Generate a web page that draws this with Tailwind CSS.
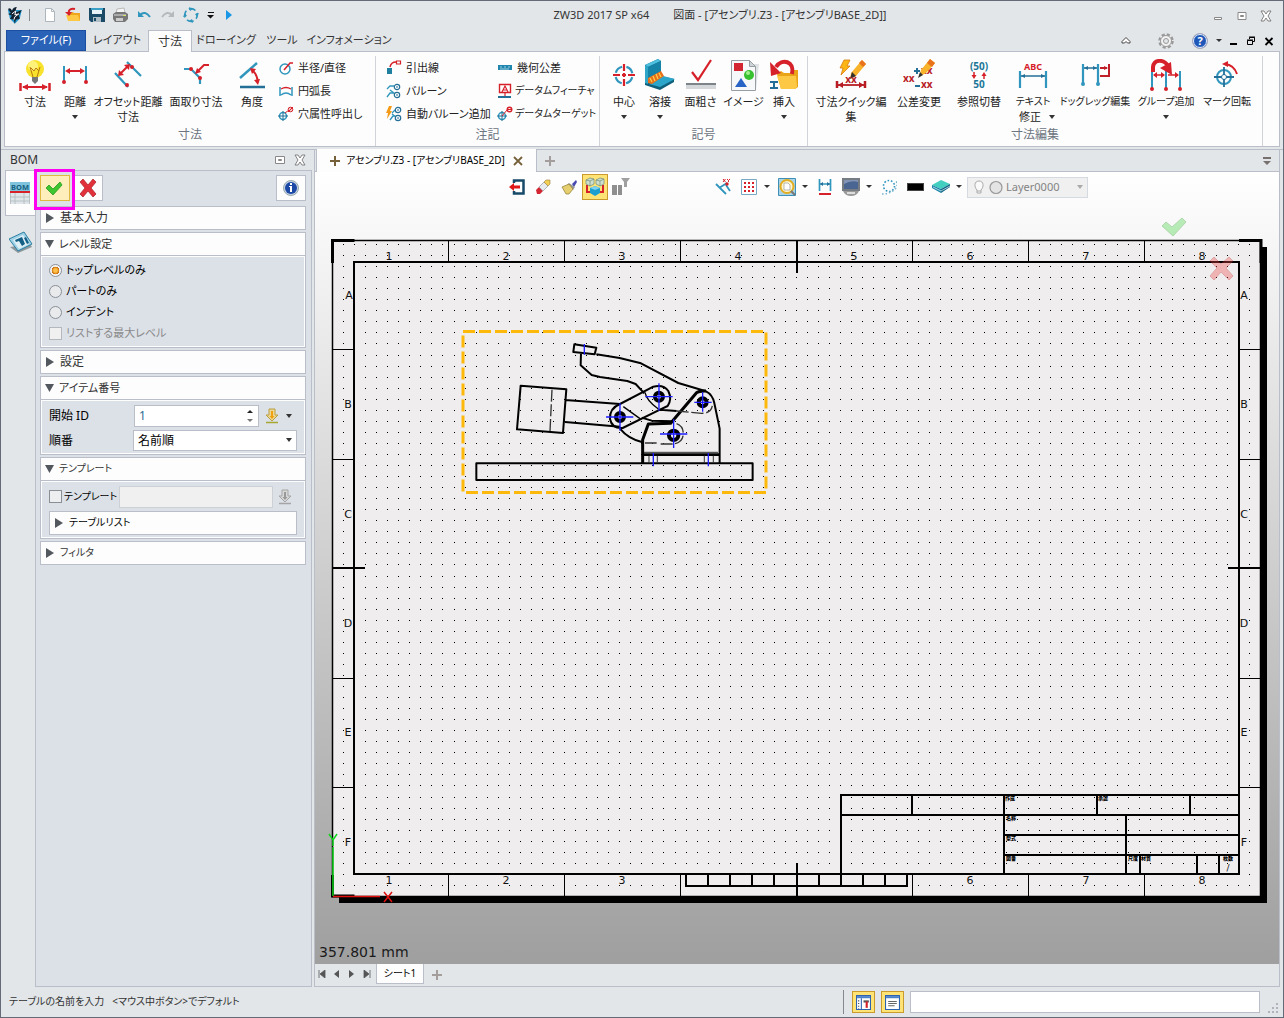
<!DOCTYPE html>
<html lang="ja">
<head>
    <meta charset="UTF-8">
    <meta name="viewport" content="width=device-width, initial-scale=1.0">
    <title>ZW3D 2017 SP x64</title>
    <script src="https://cdn.jsdelivr.net/npm/@tailwindcss/browser@4"></script>
</head>
<body class="bg-[#e2e6e9] font-['Noto_Sans','Noto_Sans_CJK_JP',sans-serif] [font-feature-settings:'palt'] text-xs text-[#333]">
<div class="flex min-h-screen flex-col border border-[#646a78]">

    <!-- Title bar -->
    <header class="flex h-[29px] items-center">
        <div class="flex w-[234px] items-center pl-1">
            <svg class="mr-1 w-5" viewBox="0 0 20 20"><path d="M3 4h14l-2 9-5 5-5-5z" fill="#2498cc"/><path d="M3 3q3-2 4 2 1-4 5-4-2 4 0 5l5-2-3 6 1 3-4 1-1 4-1-4-4-1 2-3-4-2 3-1z" fill="#123"/><path d="M7 8l4-3-1 4 4-1-4 3-1 3" fill="none" stroke="#fff"/></svg>
            <span class="mr-2 h-3 border-l border-[#888]"></span>
            <button class="w-6" aria-label="新規"><svg class="mx-auto w-4" viewBox="0 0 16 16"><path d="M3.500 1.500h6l3 3v10h-9z" fill="#fff" stroke="#aeb6bd"/><path d="M9.500 1.500v3h3" fill="none" stroke="#aeb6bd"/></svg></button>
            <button class="w-6" aria-label="開く"><svg class="mx-auto w-4" viewBox="0 0 16 16"><path d="M3 6l5-1 1 1h6v8H3z" fill="#f0a61a"/><path d="M1 8h12l2 6H3z" fill="#fdc945"/><path d="M10 2C6 1 3 3 4 6" fill="none" stroke="#d6202a" stroke-width="2"/><path d="M0 5h7L4 9z" fill="#d6202a"/></svg></button>
            <button class="w-6" aria-label="保存"><svg class="mx-auto w-4" viewBox="0 0 16 16"><path d="M0 1h16v14H2l-2-2z" fill="#1b4a66"/><path d="M3 1h10v6H3z" fill="#e8f1f5"/><path d="M2 1h12v2H2z" fill="#3aa0c8"/><path d="M4 10h8v5H4z" fill="#aebcc5"/><path d="M5 11h2v3H5z" fill="#1b4a66"/></svg></button>
            <button class="w-6" aria-label="印刷"><svg class="mx-auto w-4" viewBox="0 0 16 16"><path d="M5 2l7-1 1 5H4z" fill="#f4f4f4" stroke="#999" stroke-width=".6"/><path d="M1 7l3-2h9l3 2v5l-3 3H3l-2-3z" fill="#777"/><path d="M2 7h12v2H2z" fill="#aaa"/><path d="M4 11h7v3H4z" fill="#ccc"/><path d="M11 8h3v1h-3z" fill="#d6e46a"/></svg></button>
            <button class="w-6" aria-label="元に戻す"><svg class="mx-auto w-4" viewBox="0 0 16 16"><path d="M4 8q5-5 10 2" fill="none" stroke="#3196bd" stroke-width="2"/><path d="M2 4v6h6z" fill="#3196bd"/></svg></button>
            <button class="w-6" aria-label="やり直し"><svg class="mx-auto w-4" viewBox="0 0 16 16"><path d="M12 8q-5-5-10 2" fill="none" stroke="#b5b9bc" stroke-width="2"/><path d="M14 4v6H8z" fill="#b5b9bc"/></svg></button>
            <button class="w-6" aria-label="再生成"><svg class="mx-auto w-4" viewBox="0 0 16 16"><circle cx="8" cy="8" r="6.300" fill="none" stroke="#3196bd" stroke-width="1.700" stroke-dasharray="7 2.900" stroke-dashoffset="3"/><path d="M6 0l4 2-3 2zM16 6l-2 4-2-3zM10 16l-4-2 3-2zM0 10l2-4 2 3z" fill="#3196bd"/></svg></button>
            <button class="ml-1 w-2" aria-label="カスタマイズ"><svg class="w-2" viewBox="0 0 8 8"><path d="M1 1h6v1H1zM0 4h7l-3.500 3.500z" fill="#111"/></svg></button>
            <button class="ml-2 w-3" aria-label="次へ"><svg class="mx-auto w-2" viewBox="0 0 8 12"><path d="M1 1l6 5-6 5z" fill="#1797e6"/></svg></button>
        </div>
        <h1 class="flex flex-1 justify-center gap-6 text-[11px] whitespace-nowrap"><span>ZW3D 2017 SP x64</span><span>図面 - [アセンブリ.Z3 - [アセンブリBASE_2D]]</span></h1>
        <div class="flex w-[78px] items-center gap-3 pl-[7px]">
            <button aria-label="最小化"><svg class="w-3" viewBox="0 0 12 12"><path d="M2.500 7.500h7v2h-7z" fill="#fff" stroke="#888"/></svg></button>
            <button aria-label="最大化"><svg class="w-3" viewBox="0 0 12 12"><path d="M2 2.500h8v7H2zM4.500 5.500h3v1h-3z" fill="#fff" stroke="#888"/></svg></button>
            <button aria-label="閉じる"><svg class="w-3" viewBox="0 0 12 12"><path d="M1 1h3l2 3 2-3h3L8 6l3 5H8L6 8l-2 3H1l3-5z" fill="#fff" stroke="#777" stroke-width=".9"/></svg></button>
        </div>
    </header>

    <!-- Ribbon tabs -->
    <nav class="flex h-[21px] items-end pl-[5px] pr-[9px] whitespace-nowrap">
        <a href="#" class="flex h-[21px] w-20 items-center justify-center border border-[#1b4ea0] bg-[#2a62b8] text-[11px] text-white">ファイル(F)</a>
        <a href="#" class="flex h-[21px] w-[62px] items-center justify-center text-[11px]">レイアウト</a>
        <a href="#" class="relative -mb-px flex h-[22px] w-[44px] items-center justify-center border border-b-0 border-[#b9bec8] bg-[#fdfdfd]">寸法</a>
        <a href="#" class="flex h-[21px] w-[68px] items-center justify-center text-[11px]">ドローイング</a>
        <a href="#" class="flex h-[21px] w-[44px] items-center justify-center text-[11px]">ツール</a>
        <a href="#" class="flex h-[21px] w-[90px] items-center justify-center text-[11px]">インフォメーション</a>
        <div class="ml-auto flex h-[21px] items-center">
            <button class="mr-5" aria-label="リボンを折りたたむ"><svg class="w-5" viewBox="0 0 20 20"><path d="M6 10.500l4-4 4 4v1.500h-2.500l-1.500-1.500-1.500 1.500H6z" fill="#fff" stroke="#444"/></svg></button>
            <button class="mr-[14px]" aria-label="設定"><svg class="w-5" viewBox="0 0 20 20"><circle cx="10" cy="10" r="6.500" fill="#f2f2f2" stroke="#999" stroke-width="2.500" stroke-dasharray="3.100 2"/><circle cx="10" cy="10" r="5.500" fill="#f2f2f2" stroke="#999"/><circle cx="10" cy="10" r="2.500" fill="#e2e6e9" stroke="#999"/></svg></button>
            <button class="mr-1" aria-label="ヘルプ"><svg class="w-5" viewBox="0 0 20 20"><circle cx="10" cy="10" r="7.500" fill="#1f57b8" stroke="#aab"/><circle cx="10" cy="10" r="6.500" fill="none" stroke="#e8eefa"/><text x="10" y="14" font-size="11" font-weight="bold" fill="#fff" text-anchor="middle">?</text></svg></button>
            <button class="mr-[5px]" aria-label="ヘルプメニュー"><svg class="w-[10px]" viewBox="0 0 10 10"><path d="M2 3h6L5 6z" fill="#333"/></svg></button>
            <button class="mr-[7px]" aria-label="文書を最小化"><svg class="w-[10px]" viewBox="0 0 10 10"><path d="M1 7h7v2H1z"/></svg></button>
            <button class="mr-2" aria-label="文書を元に戻す"><svg class="w-[10px]" viewBox="0 0 10 10"><path d="M3.500 3V1.500h5v4H7M1.500 4.500h5v4h-5zM3 1h6M1 4h6" fill="none" stroke="#000"/></svg></button>
            <button aria-label="文書を閉じる"><svg class="w-[10px]" viewBox="0 0 10 10"><path d="M1.500 2l7 7M8.500 2l-7 7" stroke="#000" stroke-width="1.800"/></svg></button>
        </div>
    </nav>

    <!-- Ribbon -->
    <div class="mr-[3px] ml-[3px] flex h-24 border border-[#b9bec8] bg-[#fdfdfd] pt-1 text-[11px] leading-[15px] text-[#222] whitespace-nowrap">
        <section class="flex w-[371px] flex-col border-r border-[#d0d3d8]">
            <div class="flex h-[71px] pl-[10px]">
                <button class="flex w-10 flex-col items-center pt-[3px]">
                    <svg class="mb-[3px] w-8" viewBox="0 0 32 32"><circle cx="16" cy="10" r="9" fill="#f8e22c"/><circle cx="14" cy="7" r="5" fill="#fff27a"/><path d="M11 8l3 10M21 8l-3 10M12 9l3 3 2-3 3 3" stroke="#b9760c" fill="none"/><path d="M13 18h6v4l-3 3-3-3z" fill="#777"/><path d="M1.500 24v8M30.500 24v8" stroke="#d6202a" stroke-width="2.500"/><path d="M4 28h24" stroke="#d6202a" stroke-width="2"/><path d="M3 28l6-3v6zM29 28l-6-3v6z" fill="#d6202a"/></svg>寸法</button>
                <button class="flex w-10 flex-col items-center pt-[3px]">
                    <svg class="mb-[3px] w-8" viewBox="0 0 32 32"><path d="M5 7v17M27 7v17" stroke="#3196bd" stroke-width="2"/><path d="M9 12h14" stroke="#d6202a" stroke-width="2"/><path d="M6 12l5-3v6zM26 12l-5-3v6z" fill="#d6202a"/><circle cx="5" cy="23" r="2" fill="#d6202a"/><circle cx="27" cy="23" r="2" fill="#d6202a"/></svg>距離
                    <svg class="mt-[6px] w-[6px]" viewBox="0 0 6 4"><path d="M0 0h6L3 4z" fill="#333"/></svg></button>
                <button class="flex w-[66px] flex-col items-center pt-[3px]">
                    <svg class="mb-[3px] w-8" viewBox="0 0 32 32"><path d="M15 3l14 14M3 14l13 14" stroke="#3196bd" stroke-width="2.200"/><path d="M8 15l8-8" stroke="#d6202a" stroke-width="2"/><path d="M6 17l1-6 5 5zM18 5l-6 1 5 5z" fill="#d6202a"/><circle cx="20" cy="8" r="2" fill="#d6202a"/><circle cx="15" cy="26" r="2" fill="#d6202a"/></svg>オフセット距離<br>寸法</button>
                <button class="flex w-[70px] flex-col items-center pt-[3px]">
                    <svg class="mb-[3px] w-8" viewBox="0 0 32 32"><path d="M4 10h7l9 9v6" stroke="#3196bd" stroke-width="2.200" fill="none"/><path d="M29 6h-5l-6 6" stroke="#d6202a" stroke-width="2" fill="none"/><path d="M15 15l2-6 4 4z" fill="#d6202a"/><circle cx="11" cy="10" r="2" fill="#d6202a"/><circle cx="20" cy="19" r="2" fill="#d6202a"/></svg>面取り寸法</button>
                <button class="flex w-[42px] flex-col items-center pt-[3px]">
                    <svg class="mb-[3px] w-8" viewBox="0 0 32 32"><path d="M4 19L21 4" stroke="#3196bd" stroke-width="2.500"/><path d="M4 28h25" stroke="#236f97" stroke-width="2.500"/><path d="M16 11q5 4 6 12" stroke="#d6202a" stroke-width="2" fill="none"/><path d="M14 9l6 1-4 5zM22 26l-4-5 6-1z" fill="#d6202a"/></svg>角度</button>
                <div class="ml-[5px] grid h-[69px] grid-rows-3">
                    <button class="flex items-center gap-1"><svg class="w-4" viewBox="0 0 16 16"><circle cx="7" cy="9" r="5" fill="none" stroke="#3196bd" stroke-width="1.500"/><path d="M6 10l6-7h3" stroke="#d6202a" stroke-width="1.500" fill="none"/></svg>半径/直径</button>
                    <button class="flex items-center gap-1"><svg class="w-4" viewBox="0 0 16 16"><path d="M2 4v9M14 4v9M3 12q5-4 10 0" stroke="#3196bd" stroke-width="1.500" fill="none"/><path d="M3 6q5-3 10 0" stroke="#d6202a" stroke-width="1.300" fill="none"/></svg>円弧長</button>
                    <button class="flex items-center gap-1"><svg class="w-4" viewBox="0 0 16 16"><circle cx="5" cy="10" r="3.500" fill="none" stroke="#3196bd" stroke-width="1.500"/><path d="M0 10h10M5 5v10" stroke="#236f97"/><path d="M7 7l4-3" stroke="#d6202a"/><circle cx="12.500" cy="3.500" r="2.300" fill="#f5c5c5" stroke="#d6202a"/><path d="M10 6l5-5" stroke="#d6202a"/></svg>穴属性呼出し</button>
                </div>
            </div>
            <h2 class="text-center text-xs text-[#6c7480]">寸法</h2>
        </section>
        <section class="flex w-[224px] flex-col border-r border-[#d0d3d8]">
            <div class="flex h-[71px] pl-[10px]">
                <div class="grid h-[69px] w-[111px] grid-rows-3">
                    <button class="flex items-center gap-1"><svg class="w-4" viewBox="0 0 16 16"><path d="M1 8h5v6H1z" fill="#1f7f9f"/><path d="M4 7q1-5 6-5" stroke="#d6202a" stroke-width="1.500" fill="none"/><path d="M10.500 1h4v3h-4z" fill="#fff" stroke="#d6202a" stroke-width="1.200"/></svg>引出線</button>
                    <button class="flex items-center gap-1"><svg class="w-4" viewBox="0 0 16 16"><path d="M1 6l3-3h4M1 14l3-4h4M4 7l4 3" stroke="#3196bd" stroke-width="1.300" fill="none"/><circle cx="11" cy="4" r="2.700" fill="#fff" stroke="#236f97" stroke-width="1.200"/><circle cx="11" cy="12" r="2.700" fill="#fff" stroke="#236f97" stroke-width="1.200"/><path d="M11 3v2M11 11v2" stroke="#236f97"/></svg>バルーン</button>
                    <button class="flex items-center gap-1"><svg class="w-4" viewBox="0 0 16 16"><path d="M4 14l3-4h2M6 7l3-3M6 8l4 3" stroke="#3196bd" stroke-width="1.300" fill="none"/><path d="M3 0h3L4 5h2l-5 8 1-6H0z" fill="#f39a16"/><circle cx="12" cy="4" r="2.700" fill="#fff" stroke="#236f97" stroke-width="1.200"/><circle cx="12" cy="12" r="2.700" fill="#fff" stroke="#236f97" stroke-width="1.200"/><path d="M12 3v2M12 11v2" stroke="#236f97"/></svg>自動バルーン追加</button>
                </div>
                <div class="grid h-[69px] grid-rows-3">
                    <button class="flex items-center gap-1"><svg class="w-4" viewBox="0 0 16 16"><path d="M1 5h14v5H1z" fill="#2186ad"/><path d="M3 7h2M7 7h2M11 7h2M3 9h9" stroke="#bfe3ef" stroke-width=".8"/></svg>幾何公差</button>
                    <button class="flex items-center gap-[2px] text-[10px]"><svg class="w-4" viewBox="0 0 16 16"><path d="M2.500 1.500h11v8h-11z" fill="#fff" stroke="#d6202a" stroke-width="1.400"/><path d="M5 9l3-6 3 6M6 7h4M8 10v3" stroke="#d6202a" stroke-width="1.200" fill="none"/><path d="M1 14h13" stroke="#236f97" stroke-width="2"/></svg>データムフィーチャ</button>
                    <button class="flex items-center gap-[2px] text-[10px]"><svg class="w-4" viewBox="0 0 16 16"><circle cx="5" cy="10" r="3.500" fill="none" stroke="#3196bd" stroke-width="1.500"/><path d="M0 10h10M5 5v10" stroke="#236f97"/><path d="M5 10l5-6" stroke="#d6202a"/><circle cx="12.500" cy="3.500" r="2.300" fill="#fff" stroke="#d6202a" stroke-width="1.400"/><path d="M10 3.500h5" stroke="#d6202a"/></svg>データムターゲット</button>
                </div>
            </div>
            <h2 class="text-center text-xs text-[#6c7480]">注記</h2>
        </section>
        <section class="flex w-[208px] flex-col border-r border-[#d0d3d8]">
            <div class="flex h-[71px] pl-[6px]">
                <button class="flex w-9 flex-col items-center pt-[3px]">
                    <svg class="mb-[3px] w-8" viewBox="0 0 32 32"><circle cx="16" cy="16" r="8.500" fill="none" stroke="#3196bd" stroke-width="2.200" stroke-dasharray="9 4.350" stroke-dashoffset="-2.200"/><path d="M16 5v7M16 20v7M5 16h7M20 16h7M16 14v4M14 16h4" stroke="#d6202a" stroke-width="2.200"/></svg>中心
                    <svg class="mt-[6px] w-[6px]" viewBox="0 0 6 4"><path d="M0 0h6L3 4z" fill="#333"/></svg></button>
                <button class="flex w-9 flex-col items-center pt-[3px]">
                    <svg class="mb-[3px] w-8" viewBox="0 0 32 32"><path d="M1 6l13-6 3 2v15l13 3v3l-14 8-15-5z" fill="#0d5f7c"/><path d="M1 6L14 0l3 2L4 8z" fill="#4cc0de"/><path d="M1 6l3 2v17l-3-1z" fill="#2fa5c8"/><path d="M4 8l13-6v14L4 22z" fill="#1583a8"/><path d="M5 25l14-8 12 3-15 8z" fill="#2ba6ca"/><path d="M4 19l13-7 3 5-12 8-4-1z" fill="#e8701a"/><path d="M6 19l2 4M9 17l2 5M12 15l2 5M15 14l2 4" stroke="#ffd24a" stroke-width="1.200"/></svg>溶接
                    <svg class="mt-[6px] w-[6px]" viewBox="0 0 6 4"><path d="M0 0h6L3 4z" fill="#333"/></svg></button>
                <button class="flex w-[45px] flex-col items-center pt-[3px]">
                    <svg class="mb-[3px] w-8" viewBox="0 0 32 32"><path d="M1 25h30v5H1z" fill="#d5d8da"/><path d="M1 24h30v2H1z" fill="#7d8489"/><path d="M7 13l6 8L26 1" stroke="#d6202a" stroke-width="2.200" fill="none"/></svg>面粗さ</button>
                <button class="flex w-[41px] flex-col items-center pt-[3px]">
                    <svg class="mb-[3px] w-8" viewBox="0 0 32 32"><path d="M6 5h25l-3 26H6z" fill="#dfe2e4"/><path d="M3.500 1.500h18l6 6v24h-24z" fill="#f6f8f9" stroke="#979ea3"/><path d="M21.500 1.500v6h6z" fill="#cfd4d7" stroke="#979ea3"/><path d="M6 4h9v8H6z" fill="#d32632"/><circle cx="21" cy="16" r="5" fill="#37c02f"/><circle cx="20" cy="14" r="2" fill="#a3ee8e"/><path d="M13 19l6 9H7z" fill="#2864c6"/></svg>イメージ</button>
                <button class="flex w-10 flex-col items-center pt-[3px]">
                    <svg class="mb-[3px] w-8" viewBox="0 0 32 32"><path d="M9 15l4-3 3 2h6l3-3h5v17l-3 2H13z" fill="#e9a417"/><path d="M9 17h19l1 11-2 2H13z" fill="#fdc945"/><path d="M24 15C27 2 14-1 8 8" stroke="#d6202a" stroke-width="4" fill="none"/><path d="M2 3l1 14 10-3z" fill="#d6202a"/><path d="M2 23h8M2 29h8M6 23v6" stroke="#236f97" stroke-width="2"/></svg>挿入
                    <svg class="mt-[6px] w-[6px]" viewBox="0 0 6 4"><path d="M0 0h6L3 4z" fill="#333"/></svg></button>
            </div>
            <h2 class="text-center text-xs text-[#6c7480]">記号</h2>
        </section>
        <section class="flex w-[455px] flex-col border-r border-[#d0d3d8]">
            <div class="flex h-[71px] pl-[9px]">
                <button class="flex w-[68px] flex-col items-center pt-[3px]">
                    <svg class="mb-[3px] w-8" viewBox="0 0 32 32"><path d="M9 1h6l-3 6h3L6 16l2-7H5z" fill="#fbb616" stroke="#d97a0c" stroke-width=".8"/><path d="M27 1l4 4-10 12-6 3 1-6z" fill="#f7b32a"/><path d="M27 1l4 4-3 3-4-4z" fill="#e9721c"/><path d="M17 13l4 4-6 3z" fill="#333"/><path d="M2 22v7M30 22v7" stroke="#b81c25" stroke-width="2.500"/><path d="M3 26h26" stroke="#b81c25" stroke-width="1.800"/><path d="M3 26l5-3v6zM29 26l-5-3v6z" fill="#b81c25"/><text x="16" y="24" font-size="10" font-weight="bold" fill="#b81c25" text-anchor="middle">xx</text></svg>
                    <span class="text-center">寸法クイック編<br>集</span></button>
                <button class="flex w-[68px] flex-col items-center pt-[3px]">
                    <svg class="mb-[3px] w-8" viewBox="0 0 32 32" font-size="10" font-weight="bold" fill="#b81c25"><text x="0" y="23">xx</text><text x="18" y="15">xx</text><text x="18" y="29">xx</text><path d="M11 12h6M14 9v6M12 27h5" stroke="#236f97" stroke-width="2"/><path d="M27 0l5 4-9 10-7 4 2-7z" fill="#f7b32a"/><path d="M27 0l5 4-3 4-5-4z" fill="#e9721c"/><path d="M17 13l3 3-5 3z" fill="#333"/></svg>公差変更</button>
                <button class="flex w-[52px] flex-col items-center pt-[3px]">
                    <svg class="mb-[3px] w-8" viewBox="0 0 32 32"><g font-size="10" font-weight="bold" fill="#1b7697" text-anchor="middle"><text x="16" y="11">(50)</text><text x="16" y="29">50</text></g><path d="M11 13v5M21 15v5" stroke="#d6202a" stroke-width="1.500"/><path d="M8.500 16h5L11 20zM18.500 17h5L21 13z" fill="#d6202a"/></svg>参照切替</button>
                <button class="flex w-[56px] flex-col items-center pt-[3px]">
                    <svg class="mb-[3px] w-8" viewBox="0 0 32 32"><text x="16" y="11" font-size="9" font-weight="bold" fill="#d6202a" text-anchor="middle">ABC</text><path d="M3 12v17M29 12v17" stroke="#3196bd" stroke-width="2.200"/><path d="M4 17h24" stroke="#236f97" stroke-width="1.500"/><path d="M4 17l4-2v4zM28 17l-4-2v4z" fill="#236f97"/></svg>
                    <span class="text-[10px]">テキスト</span>
                    <span class="flex items-center gap-1 pl-2">修正<svg class="ml-1 w-[6px]" viewBox="0 0 6 4"><path d="M0 0h6L3 4z" fill="#333"/></svg></span></button>
                <button class="flex w-[68px] flex-col items-center pt-[3px] text-[10px]">
                    <svg class="mb-[3px] w-8" viewBox="0 0 32 32"><path d="M4 5v19M19 5v19" stroke="#3196bd" stroke-width="2.200"/><path d="M5 9h13" stroke="#236f97" stroke-width="1.500"/><path d="M5 9l4-2v4zM18 9l-4-2v4z" fill="#236f97"/><circle cx="4" cy="25" r="2" fill="#3196bd"/><circle cx="19" cy="25" r="2" fill="#3196bd"/><path d="M21 9h7M30 5v12h-9" stroke="#c01f29" stroke-width="2" fill="none"/><path d="M29 9l-4-2v4z" fill="#c01f29"/></svg>ドッグレッグ編集</button>
                <button class="flex w-[74px] flex-col items-center pt-[3px] text-[10px]">
                    <svg class="mb-[3px] w-8" viewBox="0 0 32 32"><path d="M2 12v17M16 12v17M30 12v17" stroke="#3196bd" stroke-width="2"/><path d="M3 13V8C4 0 14 0 18 7" stroke="#d6202a" stroke-width="4" fill="none"/><path d="M10 9l11-6 1 13z" fill="#d6202a"/><path d="M4 16h10M18 16h10" stroke="#d6202a" stroke-width="1.500"/><path d="M3 16l4-3v6zM15 16l-4-3v6zM29 16l-4-3v6z" fill="#d6202a"/><circle cx="2" cy="30" r="2" fill="#d6202a"/><circle cx="16" cy="30" r="2" fill="#d6202a"/><circle cx="30" cy="30" r="2" fill="#d6202a"/></svg>グループ追加
                    <svg class="mt-[6px] w-[6px]" viewBox="0 0 6 4"><path d="M0 0h6L3 4z" fill="#333"/></svg></button>
                <button class="flex w-[48px] flex-col items-center pt-[3px] text-[10px]">
                    <svg class="mb-[3px] w-8" viewBox="0 0 32 32"><circle cx="13" cy="18" r="7" fill="none" stroke="#3196bd" stroke-width="2"/><path d="M13 8v8M13 20v8M3 18h8M15 18h8" stroke="#236f97" stroke-width="1.800"/><circle cx="13" cy="18" r="2.500" fill="none" stroke="#236f97"/><path d="M14 5q9 1 12 10" stroke="#d6202a" stroke-width="2" fill="none"/><path d="M11 5l6-3v6z" fill="#d6202a"/></svg>マーク回転</button>
            </div>
            <h2 class="text-center text-xs text-[#6c7480]">寸法編集</h2>
        </section>
    </div>

    <main class="mt-[2px] flex flex-1 border-t border-[#b9bec8]">
        <!-- BOM panel -->
        <aside class="mr-[2px] flex w-[311px] flex-col">
            <div class="flex h-5 items-center pr-1 pl-[9px]">
                <h2>BOM</h2>
                <button class="ml-auto" aria-label="パネルを固定"><svg class="w-3" viewBox="0 0 12 12"><path d="M1.500 2.500h9v7h-9zM4.500 5.500h3v1h-3z" fill="#fff" stroke="#888"/></svg></button>
                <button class="ml-2 mr-[2px]" aria-label="パネルを閉じる"><svg class="w-3" viewBox="0 0 12 12"><path d="M1 1h3l2 3 2-3h3L8 6l3 5H8L6 8l-2 3H1l3-5z" fill="#fff" stroke="#777" stroke-width=".9"/></svg></button>
            </div>
            <div class="flex flex-1 pl-1">
                <div class="relative -mr-px flex w-[31px] flex-col">
                    <button class="flex h-[46px] items-center justify-center border border-r-0 border-[#b9bec8] bg-[#fdfdfd] pr-[3px]" aria-label="BOM">
                        <svg class="w-5" viewBox="0 0 20 24"><path d="M0 1h20v9H0z" fill="#7fc3dd"/><text x="10" y="9" font-size="7.500" font-weight="bold" fill="#155f80" text-anchor="middle">BOM</text><path d="M0 10h20v2H0z" fill="#d6202a"/><path d="M0 12h20v11H0z" fill="#dfe5e8"/><path d="M.5 12v11M5 12v11M14 12v11M19.500 12v11M0 16h20M0 20h20" stroke="#aebac0" stroke-width=".8"/></svg>
                    </button>
                    <button class="mt-3 flex h-7 items-center justify-center" aria-label="ビュー">
                        <svg class="w-6" viewBox="0 0 24 24"><path d="M1 17l8 6 14-6-2-3z" fill="#8d979c"/><path d="M0 9l15-7 8 12-14 7z" fill="#9fd2e6" stroke="#2b7fa3"/><path d="M4 10l10-5 6 9-10 5z" fill="#def0f6"/><path d="M6 10l7-3 3 7-3 2-3-5-3 1zM15 8l2-1 3 6-2 1z" fill="#135f86"/></svg>
                    </button>
                </div>
                <div class="relative flex-1 border border-[#b9bec8] bg-[#dce0e7] pt-1 pr-[5px] pb-1 pl-1">
                    <div class="mb-[5px] flex h-[26px] gap-1">
                        <button class="flex w-[30px] items-center justify-center border border-[#dfb83e] bg-[#fdeebb] pr-[2px]" aria-label="OK"><svg class="w-5" viewBox="0 0 20 20"><path d="M2 10l3-3 4 4 7-7 2 3-9 10z" fill="#3fc52f" stroke="#2a9b20" stroke-width=".8"/></svg></button>
                        <button class="flex w-[29px] items-center justify-center border border-[#b9bec8] bg-[#fdfdfd] pr-[2px]" aria-label="キャンセル"><svg class="w-5" viewBox="0 0 20 20"><path d="M2 4l3-3 5 6 5-6 3 3-5 6 5 6-3 3-5-6-5 6-3-3 5-6z" fill="#e2313a" stroke="#a91b22" stroke-width=".7"/></svg></button>
                        <button class="ml-auto flex w-[30px] items-center justify-center border border-[#b9bec8] bg-[#fdfdfd]" aria-label="情報"><svg class="w-4" viewBox="0 0 16 16"><circle cx="8" cy="8" r="7.500" fill="#c7d2e6" stroke="#9aa"/><circle cx="8" cy="8" r="6" fill="#1c48a6"/><path d="M7 3h2v2H7zM6 6h3v6H7V7H6z" fill="#fff"/></svg></button>
                    </div>
                    <span class="absolute -top-[2px] -left-[2px] size-[41px] border-[3px] border-[#ff00f0]"></span>

                    <div class="flex flex-col gap-[2px]">
                        <section class="border border-[#b9bec8]">
                            <h3 class="flex h-[22px] items-center bg-[#fdfdfd] pl-[5px]"><svg class="mr-[6px] w-2" viewBox="0 0 8 10"><path d="M0 0l8 5-8 5z" fill="#53585f"/></svg>基本入力</h3>
                        </section>
                        <section class="border border-[#b9bec8]">
                            <h3 class="flex h-[23px] items-center border-b border-[#b9bec8] bg-[#fdfdfd] pl-[4px]"><svg class="mr-[5px] w-[9px]" viewBox="0 0 9 8"><path d="M0 0h9L4.500 8z" fill="#53585f"/></svg><span class="text-[11px]">レベル設定</span></h3>
                            <div class="border border-[#fdfdfd] px-[7px] pt-[3px] pb-[2px] text-black">
                                <label class="flex h-[21px] items-center gap-1 text-[11px]"><input type="radio" name="level" checked class="size-[13px] appearance-none rounded-full border border-[#8a8f96] bg-[#f3f3f3] checked:bg-[radial-gradient(circle,#ffc04a_22%,#c66a0a_48%,#f3f3f3_52%)]">トップレベルのみ</label>
                                <label class="flex h-[21px] items-center gap-1 text-[11px]"><input type="radio" name="level" class="size-[13px] appearance-none rounded-full border border-[#8a8f96] bg-[#e8eaec] checked:bg-[radial-gradient(circle,#ffc04a_22%,#c66a0a_48%,#f3f3f3_52%)]">パートのみ</label>
                                <label class="flex h-[21px] items-center gap-1 text-[11px]"><input type="radio" name="level" class="size-[13px] appearance-none rounded-full border border-[#8a8f96] bg-[#e8eaec] checked:bg-[radial-gradient(circle,#ffc04a_22%,#c66a0a_48%,#f3f3f3_52%)]">インデント</label>
                                <label class="flex h-[21px] items-center gap-1 text-[11px] text-[#8a8a8a]"><input type="checkbox" disabled class="size-[13px] appearance-none border border-[#b4b8bd] bg-[#f0f0f0]">リストする最大レベル</label>
                            </div>
                        </section>
                        <section class="border border-[#b9bec8]">
                            <h3 class="flex h-[22px] items-center bg-[#fdfdfd] pl-[5px]"><svg class="mr-[6px] w-2" viewBox="0 0 8 10"><path d="M0 0l8 5-8 5z" fill="#53585f"/></svg>設定</h3>
                        </section>
                        <section class="border border-[#b9bec8]">
                            <h3 class="flex h-[23px] items-center border-b border-[#b9bec8] bg-[#fdfdfd] pl-[4px]"><svg class="mr-[5px] w-[9px]" viewBox="0 0 9 8"><path d="M0 0h9L4.500 8z" fill="#53585f"/></svg><span class="text-[11px]">アイテム番号</span></h3>
                            <div class="border border-[#fdfdfd] pt-[2px] pr-[7px] pl-[7px] text-black">
                                <div class="flex h-[25px] items-center">
                                    <label for="startId" class="w-[85px]">開始 ID</label>
                                    <div class="flex h-[22px] w-[125px] items-center border border-[#b9bec8] bg-white pr-1">
                                        <input id="startId" type="text" value="1" class="w-full min-w-0 px-1 text-xs text-[#2b6d94] outline-none">
                                        <svg class="w-2 shrink-0" viewBox="0 0 8 14"><path d="M1 4h6L4 1z" fill="#222"/><path d="M1 10h6l-3 3z" fill="#777"/></svg>
                                    </div>
                                    <button class="ml-[5px]" aria-label="値を取得"><svg class="w-4" viewBox="0 0 16 16"><path d="M5 1h6v6h3l-6 6-6-6h3z" fill="#ecd995" stroke="#b8a040"/><path d="M7 3h2v5h1.500L8 11 5.500 8H7z" fill="#f0a010"/><path d="M2 14.500h12" stroke="#a7a830" stroke-width="1.500"/></svg></button>
                                    <button class="ml-[6px]" aria-label="取得メニュー"><svg class="w-[6px]" viewBox="0 0 6 4"><path d="M0 0h6L3 4z" fill="#333"/></svg></button>
                                </div>
                                <div class="flex h-[25px] items-center">
                                    <label for="order" class="w-[84px]">順番</label>
                                    <div class="relative flex-1">
                                        <select id="order" class="block h-[21px] w-full appearance-none border border-[#b9bec8] bg-white px-1 text-xs text-black"><option>名前順</option></select>
                                        <svg class="pointer-events-none absolute top-2 right-[5px] w-[6px]" viewBox="0 0 6 4"><path d="M0 0h6L3 4z" fill="#333"/></svg>
                                    </div>
                                </div>
                            </div>
                        </section>
                        <section class="border border-[#b9bec8]">
                            <h3 class="flex h-[23px] items-center border-b border-[#b9bec8] bg-[#fdfdfd] pl-[4px]"><svg class="mr-[5px] w-[9px]" viewBox="0 0 9 8"><path d="M0 0h9L4.500 8z" fill="#53585f"/></svg><span class="text-[10px]">テンプレート</span></h3>
                            <div class="border border-[#fdfdfd] px-[7px] pt-[2px] pb-[2px] text-[10px] text-black">
                                <div class="mb-[2px] flex h-[25px] items-center">
                                    <label class="flex w-[70px] items-center gap-[2px] whitespace-nowrap"><input type="checkbox" id="useTemplate" class="size-[13px] appearance-none border border-[#8a8f96] bg-[#eceef0]">テンプレート</label>
                                    <input type="text" disabled aria-label="テンプレート名" class="h-[22px] w-[154px] border border-[#cdd1d6] bg-[#f0f0f0]">
                                    <button class="ml-1" aria-label="テンプレートを取得"><svg class="w-4" viewBox="0 0 16 16"><path d="M5 1h6v6h3l-6 6-6-6h3z" fill="#d8d8d8" stroke="#a5a5a5"/><path d="M7 3h2v5h1.500L8 11 5.500 8H7z" fill="#999"/><path d="M2 14.500h12" stroke="#a5a5a5" stroke-width="1.500"/></svg></button>
                                </div>
                                <h4 class="flex h-6 items-center border border-[#b9bec8] bg-[#fdfdfd] pl-[5px]"><svg class="mr-[6px] w-2" viewBox="0 0 8 10"><path d="M0 0l8 5-8 5z" fill="#53585f"/></svg>テーブルリスト</h4>
                            </div>
                        </section>
                        <section class="border border-[#b9bec8]">
                            <h3 class="flex h-[22px] items-center bg-[#fdfdfd] pl-[5px]"><svg class="mr-[6px] w-2" viewBox="0 0 8 10"><path d="M0 0l8 5-8 5z" fill="#53585f"/></svg><span class="text-[10px]">フィルタ</span></h3>
                        </section>
                    </div>
                </div>
            </div>
        </aside>

        <!-- Document area -->
        <section class="mr-[3px] flex min-w-0 flex-1 flex-col border-x border-b border-[#b9bec8]">
            <div class="flex h-[22px] items-end border-b border-[#b9bec8] pl-px">
                <div class="relative -mb-px flex h-[23px] items-center border-x border-[#b9bec8] bg-[#fdfdfd] pr-[13px] pl-[13px] text-[10px] whitespace-nowrap text-black">
                    <svg class="mr-[6px] w-[10px]" viewBox="0 0 10 10"><path d="M5 0v10M0 5h10" stroke="#75603a" stroke-width="2"/></svg>
                    <a href="#">アセンブリ.Z3 - [アセンブリBASE_2D]</a>
                    <button class="ml-2" aria-label="タブを閉じる"><svg class="w-[10px]" viewBox="0 0 10 10"><path d="M1 1l8 8M9 1L1 9" stroke="#75603a" stroke-width="1.800"/></svg></button>
                </div>
                <button class="mb-[5px] ml-2" aria-label="新しいタブ"><svg class="w-[10px]" viewBox="0 0 10 10"><path d="M5 0v10M0 5h10" stroke="#a39d9b" stroke-width="2"/></svg></button>
                <button class="mr-2 mb-[5px] ml-auto" aria-label="タブ一覧"><svg class="w-2" viewBox="0 0 8 10"><path d="M0 1h8v2H0zM0 5h8L4 9z" fill="#77706e"/></svg></button>
            </div>
            <div class="flex flex-1 flex-col bg-linear-to-b from-white to-[#9f9f9f]">
                <div class="flex h-8 items-center justify-center pr-[2px] pb-[2px]">
                    <button class="flex w-[26px] justify-center" aria-label="終了"><svg class="w-4" viewBox="0 0 16 16"><path d="M5 4V1.500h9.500v13H5V12" fill="none" stroke="#174a68" stroke-width="2.500"/><path d="M0 8l5-4v2.500h6v3H5V12z" fill="#e01818"/></svg></button>
                    <button class="flex w-[26px] justify-center" aria-label="削除"><svg class="w-4" viewBox="0 0 16 16"><path d="M1 11l3-3 4 4-3 3H2z" fill="#d32632"/><path d="M4 8l5-5 4 4-5 5z" fill="#e9ecee" stroke="#888" stroke-width=".6"/><path d="M9 3l2-2h4v4l-2 2z" fill="#f3cf54" stroke="#99803a" stroke-width=".6"/></svg></button>
                    <button class="flex w-[26px] justify-center" aria-label="ブラシ"><svg class="w-4" viewBox="0 0 16 16"><path d="M11 5l4-4 1 2-3 5z" fill="#4a4ab0"/><path d="M8 4l6 4-2 3-6-5z" fill="#999"/><path d="M1 8l7-3 4 5-4 5-3 0z" fill="#e6cf6e" stroke="#8f7c30" stroke-width=".7"/></svg></button>
                    <button class="flex size-[26px] items-center justify-center border border-[#c99b2c] bg-[#ffe375]" aria-label="部品選択"><svg class="w-5" viewBox="0 0 20 20"><path d="M2 8v7h4M18 8v7h-4" fill="none" stroke="#d6202a" stroke-width="2"/><path d="M1 3l4-2 4 1v5L5 9 1 7zM11 3l4-2 4 1v5l-4 2-4-2z" fill="#cfe0cf" stroke="#6f8a7a" stroke-width=".7"/><path d="M1 3l4 1 4-2M5 4v5M11 3l4 1 4-2M15 4v5" stroke="#6f8a7a" stroke-width=".7" fill="none"/><path d="M5 11l5-2 5 2v5l-5 3-5-3z" fill="#1a9fd0"/><path d="M5 11l5 2 5-2-5-2z" fill="#7fd2ee"/></svg></button>
                    <button class="flex w-[26px] justify-center" aria-label="フィルタ"><svg class="w-5" viewBox="0 0 20 20"><path d="M1 8h5v10H1zM7 8h4v10H7z" fill="#8f8f8f"/><path d="M10 1h9l-3 4v5h-3V5z" fill="#a0a0a0"/></svg></button>
                    <button class="ml-[76px] flex w-[26px] justify-center" aria-label="座標"><svg class="w-4" viewBox="0 0 16 16"><path d="M1 5l10 10M4 9l8-5M11 6l4 6" stroke="#3196bd" stroke-width="1.800"/><circle cx="12" cy="5" r="1.700" fill="#d6202a"/><path d="M8 0l2.500 3M10.500 0L8 3M12 0l1.500 1.500L15 0M13.500 1.500V3" stroke="#d6202a" fill="none"/></svg></button>
                    <button class="flex w-[26px] justify-center" aria-label="グリッド"><svg class="w-4" viewBox="0 0 16 16"><path d="M.5.500h15v15H.5z" fill="#fff" stroke="#7aa9c4"/><path d="M3 4h10M3 8h10M3 12h10" stroke="#d6202a" stroke-width="2" stroke-dasharray="2"/></svg></button>
                    <svg class="mr-[3px] w-[9px]" viewBox="0 0 9 6"><path d="M2 1h6L5 4z" fill="#333"/></svg>
                    <button class="flex w-[26px] justify-center" aria-label="ズーム"><svg class="w-[18px]" viewBox="0 0 18 18"><path d="M.5.500h17v17H.5z" fill="#a8d3e8" stroke="#3f90b8"/><circle cx="9" cy="8.500" r="6.500" fill="#fff6d0" stroke="#e3ad22" stroke-width="2"/><path d="M6 5h4l2 2v5H6z" fill="#fff" stroke="#999" stroke-width=".7"/><path d="M13 13l4 4" stroke="#777" stroke-width="2"/></svg></button>
                    <svg class="mr-[3px] w-[9px]" viewBox="0 0 9 6"><path d="M2 1h6L5 4z" fill="#333"/></svg>
                    <button class="flex w-[26px] justify-center" aria-label="寸法表示"><svg class="w-4" viewBox="0 0 16 16"><path d="M2.500 0v12M13.500 0v12M3 5h10" stroke="#3196bd" stroke-width="1.700"/><path d="M3 5l3-2v4zM13 5l-3-2v4z" fill="#236f97"/><path d="M2 15h12" stroke="#d6202a" stroke-width="2"/></svg></button>
                    <button class="flex w-[26px] justify-center" aria-label="表示"><svg class="w-[18px]" viewBox="0 0 18 18"><path d="M0 0h18v13H0z" fill="#777c82"/><path d="M2 2h14v9H2z" fill="#4b6592"/><path d="M2 6q7-4 14-2V2H2z" fill="#8294b5"/><path d="M1 13h16q-2 5-8 5t-8-5z" fill="#9a9a9a"/><path d="M5 14h8v2H5z" fill="#ddd"/></svg></button>
                    <svg class="mr-[3px] w-[9px]" viewBox="0 0 9 6"><path d="M2 1h6L5 4z" fill="#333"/></svg>
                    <button class="flex w-[26px] justify-center" aria-label="曲線"><svg class="w-4" viewBox="0 0 16 16"><circle cx="8" cy="7" r="5.500" fill="none" stroke="#3196bd" stroke-width="1.600" stroke-dasharray="1.600 1.800"/><path d="M1 15q7 0 12-4t2-9" fill="none" stroke="#7ab6d0" stroke-width="1.500" stroke-dasharray="1.500 2"/></svg></button>
                    <button class="flex w-[26px] justify-center" aria-label="線色"><span class="h-2 w-[17px] border border-[#444] bg-black"></span></button>
                    <button class="flex w-[26px] justify-center" aria-label="レイヤー"><svg class="w-[18px]" viewBox="0 0 18 14"><path d="M0 5l9-5 9 4-9 5z" fill="#43cfc0"/><path d="M0 5l9 4v4L0 8z" fill="#1a83a8"/><path d="M9 9l9-5v3l-9 6z" fill="#0e6383"/><path d="M1 7l8 4 9-5" stroke="#eaf6f8" fill="none" stroke-width=".7"/></svg></button>
                    <svg class="mr-1 w-[9px]" viewBox="0 0 9 6"><path d="M2 1h6L5 4z" fill="#333"/></svg>
                    <div class="relative w-[121px]">
                        <select disabled aria-label="レイヤー名" class="block h-[21px] w-full appearance-none border border-[#d5d9e0] bg-[#f0f0f0] pl-[38px] text-[11px] text-[#838383]"><option>Layer0000</option></select>
                        <svg class="pointer-events-none absolute top-[3px] left-[6px] w-8" viewBox="0 0 32 15"><path d="M4 10C1 7 1 1 6 1s5 6 2 9v3H4zM4 11h4" fill="#fafafa" stroke="#aaa"/><circle cx="23" cy="7.500" r="6" fill="#e4e4e4" stroke="#999" stroke-width="1.200"/></svg>
                        <svg class="pointer-events-none absolute top-2 right-[5px] w-[6px]" viewBox="0 0 6 4"><path d="M0 0h6L3 4z" fill="#aaa"/></svg>
                    </div>
                </div>

                <!-- Drawing sheet -->
                <svg class="block w-full" viewBox="315 204 964 740" font-family="'DejaVu Sans', sans-serif">
                    <path d="M339 247h928v656H339z"/>
                    <path d="M332 240h929v657H332z" fill="#efedee"/>
                    <path id="gridDots" shape-rendering="crispEdges"/>
                    <g fill="none" stroke="#000">
                        <path d="M332.500 240.500h928v656h-928z" stroke-width="1.500"/>
                        <path d="M354 262h885v612h-885z" stroke-width="2"/>
                        <path d="M332.500 263v-22.500h22M1239 240.500h22V263M332.500 875v21h22" stroke-width="3"/>
                        <path d="M448.500 240v22M564.500 240v22M680.500 240v22M912.500 240v22M1028.500 240v22M1144.500 240v22M448.500 875v21M564.500 875v21M680.500 875v21M912.500 875v21M1028.500 875v21M1144.500 875v21M332 349.500h22M332 459.500h22M332 678.500h22M332 787.500h22M1239 349.500h22M1239 459.500h22M1239 678.500h22M1239 787.500h22"/>
                        <path d="M797 240v33M797 863v33M332 568h33M1228 568h33" stroke-width="2"/>
                        <path d="M686 874v12h221v-12M708 874v12M730 874v12M752 874v12M774 874v12M819 874v12M841 874v12M863 874v12M885 874v12" stroke-width="2"/>
                        <path d="M840 795h399M841 795v79M841 815h398M912 795v20M1004 795v79M1097 795v20M1190 795v20M1004 835h235M1004 855h235M1126 815v59M1140 855v19M1197 855v19M1219 855v19" stroke-width="2"/>
                    </g>
                    <g font-size="11" text-anchor="middle" fill="#111">
                        <text x="389" y="260">1</text><text x="506" y="260">2</text><text x="622" y="260">3</text><text x="738" y="260">4</text><text x="854" y="260">5</text><text x="970" y="260">6</text><text x="1086" y="260">7</text><text x="1202" y="260">8</text>
                        <text x="389" y="884">1</text><text x="506" y="884">2</text><text x="622" y="884">3</text><text x="970" y="884">6</text><text x="1086" y="884">7</text><text x="1202" y="884">8</text>
                        <text x="349" y="299">A</text><text x="348" y="408">B</text><text x="348" y="518">C</text><text x="348" y="627">D</text><text x="348" y="736">E</text><text x="348" y="846">F</text>
                        <text x="1244" y="299">A</text><text x="1244" y="408">B</text><text x="1244" y="518">C</text><text x="1244" y="627">D</text><text x="1244" y="736">E</text><text x="1244" y="846">F</text>
                        <text x="1228" y="871" font-size="9">/</text>
                    </g>
                    <g font-family="'Noto Sans CJK JP', sans-serif" font-size="5" font-weight="900" fill="#000">
                        <text x="1005" y="800">作成</text><text x="1098" y="800">承認</text><text x="1006" y="820">名称</text><text x="1006" y="840">型式</text><text x="1006" y="860">図番</text><text x="1128" y="860">尺度</text><text x="1141" y="860">材質</text><text x="1223" y="860">枚数</text>
                    </g>

                    <!-- Toggle clamp view -->
                    <path d="M463 331.500h303v161H463z" fill="none" stroke="#fdb90b" stroke-width="3" stroke-dasharray="12 4"/>
                    <g transform="translate(450 320) scale(.3333)" fill="none" stroke="#000" stroke-width="6" stroke-linejoin="round">
                        <path d="M79 430h829v50H79zM212 197l137 11-10 131-138-11zM345 240l165 12M345 306l165 14"/>
                        <path d="M373 73l66 10-5 20-64-7z"/>
                        <path d="M393 101l-1 35 33 29 25 6 82 12 25 9 26 28M439 103l70 11 64 16 112 59 83 25q20 10 25 35l16 77v104"/>
                        <path d="M578 429v-70l17-47 67-2 77-91q8-7 29-6" stroke-width="9"/>
                        <path d="M578 404h230" stroke-width="8"/>
                        <path d="M510 252l100-52q30-8 45 13 12 24-2 45l-23 11-112 55q-32 2-38-27-2-32 30-45zM630 269l50 4M510 326q25 31 68 41M575 293l30 9 62 2"/>
                        <path d="M585 217q5 25 40 50M520 260l50 36" stroke-width="4"/>
                        <path d="M306 209l-6 125M680 273l75 7q28 0 32-22M585 369h35M632 372h38q28-4 30-30 0-26-24-32" stroke="#333" stroke-width="4" stroke-dasharray="36 8"/>
                        <path d="M582 397h222M597 407v22M622 407v22M763 407v22M790 407v22" stroke="#333" stroke-width="3"/>
                        <g stroke-width="12"><circle cx="510" cy="291" r="12"/><circle cx="627" cy="230" r="12"/><circle cx="758" cy="247" r="12"/><circle cx="671" cy="346" r="14"/></g>
                        <path d="M468 291h82M510 250v82M586 230h82M627 190v82M733 247h52M758 217v58M630 342h82M671 298v86M610 399v40M775 399v40M403 72v32" stroke="#1b1bff" stroke-width="4"/>
                    </g>

                    <!-- Origin axes -->
                    <path d="M333 896v-49M329 834l4 6 4-6M333 840v6" fill="none" stroke="#0fd51b" stroke-width="1.500"/>
                    <path d="M333 896.500h47M384 892l8 10M392 892l-8 10" fill="none" stroke="#e01010" stroke-width="1.500"/>

                    <g opacity=".35">
                        <path d="M1162 226l4-4 6 5 10-9 4 4-13 14z" fill="#3fd53f" stroke="#2a9b20"/>
                        <path d="M1210 261l4-4 7 7 8-7 4 4-7 7 7 8-4 4-8-8-7 8-4-4 7-8z" fill="#ef4a4a" stroke="#c02020"/>
                    </g>
                </svg>
                <p class="h-5 pl-1 font-['DejaVu_Sans','Noto_Sans',sans-serif] text-sm leading-4 text-[#1a1a1a]">357.801 mm</p>
            </div>
            <div class="flex h-[22px] items-start">
                <div class="flex h-5 w-[61px] items-center gap-[7px] pl-[3px]">
                    <button aria-label="最初のシート"><svg class="w-2" viewBox="0 0 8 8"><path d="M1 0v8M7 0v8L2 4z" fill="#555" stroke="#555" stroke-width=".8"/></svg></button>
                    <button aria-label="前のシート"><svg class="w-2" viewBox="0 0 8 8"><path d="M6 0v8L1 4z" fill="#555"/></svg></button>
                    <button aria-label="次のシート"><svg class="w-2" viewBox="0 0 8 8"><path d="M1 0v8l5-4z" fill="#555"/></svg></button>
                    <button aria-label="最後のシート"><svg class="w-2" viewBox="0 0 8 8"><path d="M7 0v8M1 0v8l5-4z" fill="#555" stroke="#555" stroke-width=".8"/></svg></button>
                </div>
                <a href="#" class="flex h-5 w-12 items-center justify-center border border-t-0 border-[#b9bec8] bg-[#fdfdfd] text-[10px] text-black">シート1</a>
                <button class="mt-[6px] ml-2" aria-label="シート追加"><svg class="w-[10px]" viewBox="0 0 10 10"><path d="M5 0v10M0 5h10" stroke="#a39d9b" stroke-width="2"/></svg></button>
            </div>
        </section>
    </main>

    <!-- Status bar -->
    <footer class="flex h-[30px] items-center pl-2">
        <p class="flex gap-2 text-[10px]"><span>テーブルの名前を入力</span><span>&lt;マウス中ボタン&gt;でデフォルト</span></p>
        <span class="ml-auto h-6 border-l border-[#85898f]"></span>
        <button class="ml-2 flex h-[22px] w-[23px] items-center justify-center border border-[#c99b2c] bg-[#ffe375]" aria-label="マネージャ"><svg class="w-[15px]" viewBox="0 0 14 14"><path d="M.5.500h13v13H.5z" fill="#fff" stroke="#2f62ae"/><path d="M1 1h12v2H1z" fill="#4a80cc"/><path d="M2.500 5v8" stroke="#335" stroke-dasharray="1 1.500"/><path d="M5 3v10" stroke="#2f62ae"/><path d="M7 5h5v2H7z" fill="#555"/><path d="M9 6h2v6H9z" fill="#d6202a"/></svg></button>
        <button class="ml-[6px] flex h-[22px] w-[23px] items-center justify-center border border-[#c99b2c] bg-[#ffe375]" aria-label="出力"><svg class="w-[15px]" viewBox="0 0 14 14"><path d="M.5.500h13v13H.5z" fill="#fff" stroke="#2f62ae"/><path d="M1 1h12v2H1z" fill="#4a80cc"/><path d="M3 6h8M3 8h8M3 10h6" stroke="#666"/></svg></button>
        <input type="text" aria-label="メッセージ" class="ml-[6px] h-[22px] w-[350px] border border-[#b9bec8] bg-white px-1">
        <svg class="ml-2 mr-[3px] mt-3 w-3" viewBox="0 0 12 12"><path d="M8 1h2v2H8zM4 5h2v2H4zM8 5h2v2H8zM0 9h2v2H0zM4 9h2v2H4zM8 9h2v2H8z" fill="#aeb4bc"/></svg>
    </footer>
</div>

<script>
    // Grid dots on the drawing sheet, snapped to whole pixels
    const pitch = 11.05;
    let dots = '';
    for (let row = 0; row < 59; row++) {
        for (let col = 0; col < 83; col++) {
            const x = Math.round(343 + col * pitch);
            const y = Math.round(244 + row * pitch);
            dots += `M${x} ${y}h1v1h-1z`;
        }
    }
    document.getElementById('gridDots').setAttribute('d', dots);
</script>
</body>
</html>
